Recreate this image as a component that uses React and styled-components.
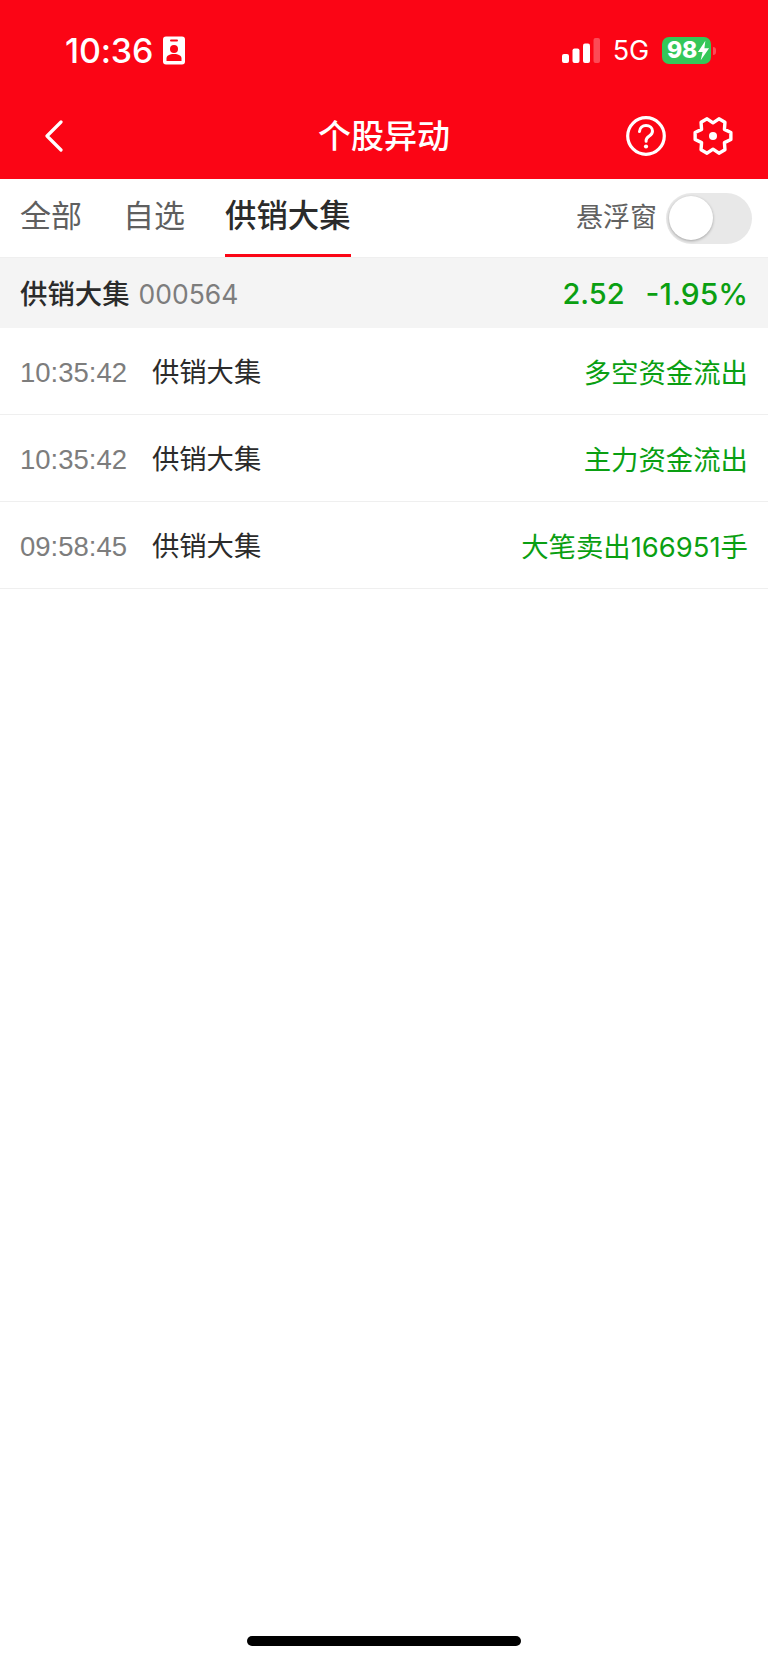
import React from "react";
import styled, { createGlobalStyle } from "styled-components";

const Global = createGlobalStyle`
  html, body { margin: 0; padding: 0; background: #fff; }
  body { font-family: Inter, "Noto Sans CJK SC", sans-serif; }
  * { box-sizing: border-box; }
`;
const CJK = `Inter, "Noto Sans CJK SC", sans-serif`;
const RED = "#fb0515";
const GREEN = "#0a9f12";

const Page = styled.div`
  width: 768px; height: 1663px; background: #fff; display: flex; flex-direction: column;
  font-family: ${CJK}; overflow: hidden;
`;
const Header = styled.header`
  height: 179px; background: ${RED}; color: #fff; display: flex; flex-direction: column; flex: none;
`;
const StatusBar = styled.div`
  height: 99px; padding: 2px 0 0 65px; display: flex; align-items: center; justify-content: space-between;
`;
const StatusLeft = styled.div`display: flex; align-items: center; gap: 10px;`;
const Clock = styled.span`font-size: 34px; font-weight: 500; line-height: 40px; letter-spacing: -0.2px;`;
const StatusRight = styled.div`display: flex; align-items: center; padding-right: 52px;`;
const Net = styled.span`font-size: 27px; font-weight: 400; margin: 0 13px 0 12px; line-height: 30px; letter-spacing: -0.2px;`;
const Battery = styled.span`
  width: 49px; height: 27px; border-radius: 7px; background: #34c759; color: #fff; display: flex; align-items: center;
  padding-left: 5px; font-size: 23px; font-weight: 800; line-height: 27px; letter-spacing: -0.3px;
`;
const BatteryCap = styled.span`
  width: 3px; height: 8px; margin-left: 2px; background: rgba(255,255,255,.28); border-radius: 0 3px 3px 0;
`;
const NavBar = styled.div`
  flex: 1; display: flex; align-items: center; justify-content: space-between; padding: 0 35px 6px 45px; position: relative;
`;
const Title = styled.div`
  font-size: 33px; font-weight: 500; line-height: 40px; position: absolute; left: 0; right: 0; text-align: center;
`;
const NavIcons = styled.div`display: flex; align-items: center; gap: 27px;`;

const Tabs = styled.nav`
  height: 78px; flex: none; display: flex; align-items: stretch; padding: 0 16px 0 20px; background: #fff;
`;
const Tab = styled.div`
  font-size: ${p => (p.$active ? 31.4 : 31)}px; line-height: 36px; height: 78px; padding-top: 19px; margin-right: ${p => p.$mr}px;
  color: ${p => (p.$active ? "#2b2b2b" : "#5f5f5f")}; font-weight: ${p => (p.$active ? 500 : 400)};
  border-bottom: 3px solid ${p => (p.$active ? "#fb0515" : "transparent")};
  white-space: nowrap;
`;
const FloatWrap = styled.div`
  margin-left: auto; display: flex; align-items: center; gap: 9px; height: 78px;
`;
const FloatLabel = styled.span`font-size: 27px; color: #616161; line-height: 34px;`;
const Toggle = styled.div`
  width: 86px; height: 51px; border-radius: 26px; background: #e8e8e8; position: relative;
`;
const Knob = styled.div`
  position: absolute; left: 3px; top: 3px; width: 44px; height: 44px; border-radius: 50%; background: #fff;
  box-shadow: 0 1px 3px rgba(0,0,0,.3);
`;
const Summary = styled.div`
  height: 71px; flex: none; background: #f4f4f4; display: flex; align-items: center; padding: 1px 20px 0 20px; justify-content: space-between;
  border-top: 1px solid #efefef;
`;
const SummaryLeft = styled.div`display: flex; align-items: center; gap: 9px;`;
const StockName = styled.span`font-size: 27.4px; font-weight: 500; color: #2b2b2b; line-height: 34px;`;
const StockCode = styled.span`font-size: 26.5px; color: #7d7d7d; line-height: 34px;`;
const SummaryRight = styled.div`display: flex; align-items: center; gap: 21px; color: ${GREEN}; font-weight: 500; line-height: 36px;`;
const Price = styled.span`font-size: 29px;`;
const Change = styled.span`font-size: 30px;`;
const Row = styled.div`
  height: 87px; flex: none; display: flex; align-items: center; padding: 3px 20px 0 20px; border-bottom: 1px solid #efefef;
`;
const Time = styled.span`
  width: 132px; font-family: "Liberation Sans", sans-serif; font-size: 27.5px; color: #7d7d7d; line-height: 34px; flex: none;
`;
const Name = styled.span`font-size: 27.3px; color: #2b2b2b; line-height: 34px;`;
const Event = styled.span`margin-left: auto; font-size: 27.4px; color: ${GREEN}; line-height: 34px;`;
const Spacer = styled.div`flex: 1;`;
const HomeBarWrap = styled.div`display: flex; justify-content: center; height: 27px; flex: none;`;
const HomeBar = styled.div`width: 274px; height: 10px; border-radius: 5px; background: #000;`;

const rows = [
  ["10:35:42", "多空资金流出"],
  ["10:35:42", "主力资金流出"],
  ["09:58:45", "大笔卖出166951手"],
];

const gearPoints = Array.from({ length: 6 }, (_, i) => {
  const a = i * 60;
  const pt = (deg, r) => {
    const t = (deg * Math.PI) / 180;
    return `${(20 + r * Math.cos(t)).toFixed(2)},${(20 + r * Math.sin(t)).toFixed(2)}`;
  };
  return [pt(a - 11, 18.2), pt(a + 11, 18.2), pt(a + 30, 13.2)].join(" ");
}).join(" ");

export default function App() {
  return (
    <Page>
      <Global />
      <Header>
        <StatusBar>
          <StatusLeft>
            <Clock>10:36</Clock>
            <svg width="22" height="29" viewBox="0 0 22 29">
              <rect width="22" height="28" y="0.5" rx="3" fill="#fff" />
              <rect x="7" y="3.5" width="8" height="2" rx="1" fill={RED} />
              <circle cx="11" cy="13" r="4" fill={RED} />
              <path d="M3.5 25v-2.5c0-3 3-4.500 7.500-4.500s7.500 1.500 7.500 4.500V25z" fill={RED} />
            </svg>
          </StatusLeft>
          <StatusRight>
            <svg width="38" height="26" viewBox="0 0 38 26" style={{ marginRight: 1 }}>
              <rect x="0" y="16" width="7" height="9" rx="2" fill="#fff" />
              <rect x="10.500" y="10.500" width="7" height="14.500" rx="2" fill="#fff" />
              <rect x="21" y="5.500" width="7" height="19.500" rx="2" fill="#fff" />
              <rect x="31.500" y="0" width="6.500" height="25" rx="2" fill="#fff" opacity=".28" />
            </svg>
            <Net>5G</Net>
            <Battery>
              98
              <svg width="13" height="21" viewBox="0 0 14 21">
                <path d="M9 0 1 12h5l-2 9 9-13H8z" fill="#fff" />
              </svg>
            </Battery>
            <BatteryCap />
          </StatusRight>
        </StatusBar>
        <NavBar>
          <svg width="18" height="32" viewBox="0 0 18 32" fill="none">
            <path d="M16 2 2 16l14 14" stroke="#fff" strokeWidth="3.200" strokeLinecap="round" strokeLinejoin="round" />
          </svg>
          <Title>个股异动</Title>
          <NavIcons>
            <svg width="40" height="40" viewBox="0 0 40 40" fill="none">
              <circle cx="20" cy="20" r="18.300" stroke="#fff" strokeWidth="3.200" />
              <path d="M13.500 15.500c.3-3.800 3-6 6.500-6 3.700 0 6.500 2.300 6.500 5.500 0 2.500-1.400 3.800-3.200 5-1.900 1.300-3.200 2.300-3.200 4.600v.6" stroke="#fff" strokeWidth="3" strokeLinecap="round" />
              <circle cx="20" cy="30.500" r="2.100" fill="#fff" />
            </svg>
            <svg width="40" height="40" viewBox="0 0 40 40" fill="none">
              <polygon points={gearPoints} stroke="#fff" strokeWidth="3.400" strokeLinejoin="round" />
              <circle cx="20" cy="20" r="4" fill="#fff" />
            </svg>
          </NavIcons>
        </NavBar>
      </Header>
      <Tabs>
        <Tab $mr={41}>全部</Tab>
        <Tab $mr={40}>自选</Tab>
        <Tab $active $mr={0}>供销大集</Tab>
        <FloatWrap>
          <FloatLabel>悬浮窗</FloatLabel>
          <Toggle><Knob /></Toggle>
        </FloatWrap>
      </Tabs>
      <Summary>
        <SummaryLeft>
          <StockName>供销大集</StockName>
          <StockCode>000564</StockCode>
        </SummaryLeft>
        <SummaryRight>
          <Price>2.52</Price>
          <Change>-1.95%</Change>
        </SummaryRight>
      </Summary>
      {rows.map(([t, e], i) => (
        <Row key={i}>
          <Time>{t}</Time>
          <Name>供销大集</Name>
          <Event>{e}</Event>
        </Row>
      ))}
      <Spacer />
      <HomeBarWrap><HomeBar /></HomeBarWrap>
    </Page>
  );
}
